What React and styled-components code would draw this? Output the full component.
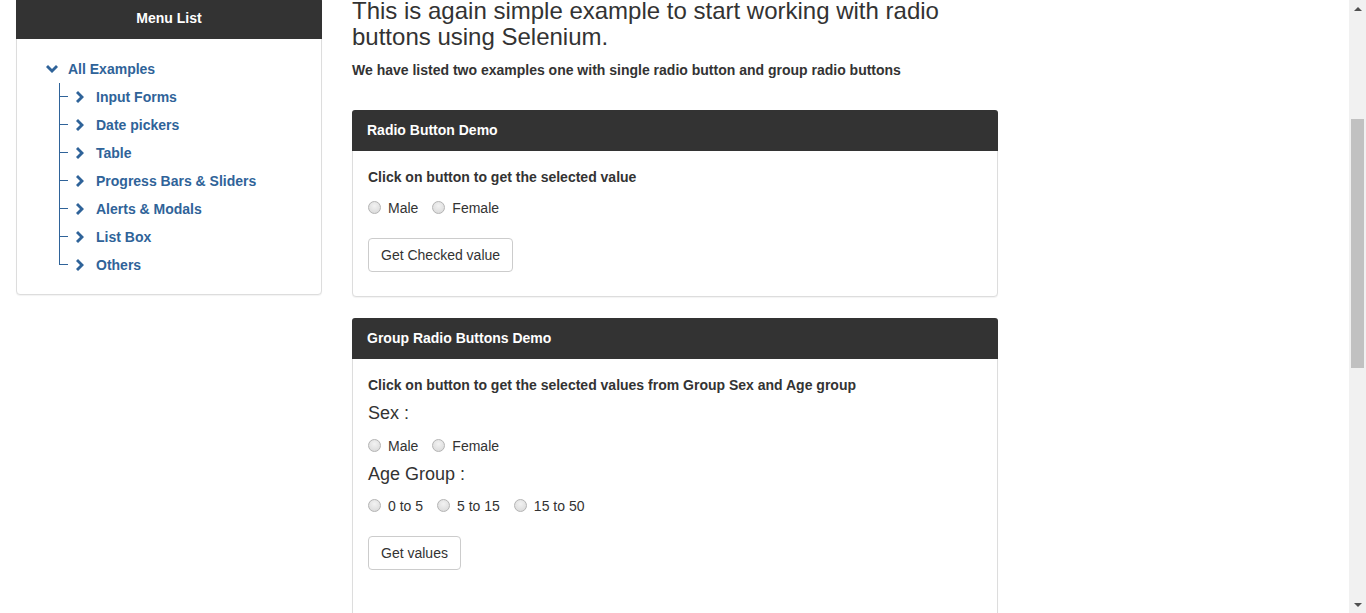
import styled, { createGlobalStyle } from "styled-components";

const GlobalStyle = createGlobalStyle`
  html, body {
    margin: 0;
    padding: 0;
    height: 613px;
    overflow: hidden;
    background: #fff;
  }
  body {
    font-family: "Liberation Sans", Arial, sans-serif;
    font-size: 14px;
    color: #333;
  }
`;

const LINK = "#2f6399";

const menu = [
  "Input Forms",
  "Date pickers",
  "Table",
  "Progress Bars & Sliders",
  "Alerts & Modals",
  "List Box",
  "Others",
];

const ChevronDown = () => (
  <svg width="12" height="8" viewBox="0 0 12 8">
    <polygon points="0,2 2,0 6,4 10,0 12,2 6,8" fill="currentColor" />
  </svg>
);

const ChevronRight = () => (
  <svg width="8" height="12" viewBox="0 0 8 12">
    <polygon points="2,0 8,6 2,12 0,10 4,6 0,2" fill="currentColor" />
  </svg>
);

function Sidebar() {
  return (
    <MenuPanel>
      <MenuHeader>Menu List</MenuHeader>
      <MenuBody>
        <TopRow>
          <Chevron $gap={0}>
            <ChevronDown />
          </Chevron>
          <TreeLink $gap={10}>All Examples</TreeLink>
        </TopRow>
        <SubList>
          {menu.map((item, index) => (
            <SubRow key={item}>
              <Branch $last={index === menu.length - 1} />
              <Chevron $gap={8}>
                <ChevronRight />
              </Chevron>
              <TreeLink $gap={12}>{item}</TreeLink>
            </SubRow>
          ))}
        </SubList>
      </MenuBody>
    </MenuPanel>
  );
}

function RadioGroup({ name, options, top }) {
  return (
    <RadioRow $top={top}>
      {options.map((option) => (
        <RadioLabel key={option}>
          <Radio type="radio" name={name} value={option} />
          {option}
        </RadioLabel>
      ))}
    </RadioRow>
  );
}

export default function App() {
  return (
    <>
      <GlobalStyle />
      <Screen>
        <Page>
          <Sidebar />
          <Main>
            <Title>
              This is again simple example to start working with radio buttons
              using Selenium.
            </Title>
            <Lead>
              We have listed two examples one with single radio button and group
              radio buttons
            </Lead>

            <Panel>
              <PanelHeading>Radio Button Demo</PanelHeading>
              <PanelBody>
                <Hint>Click on button to get the selected value</Hint>
                <RadioGroup name="optradio" options={["Male", "Female"]} top={11} />
                <Button>Get Checked value</Button>
              </PanelBody>
            </Panel>

            <Panel $open>
              <PanelHeading>Group Radio Buttons Demo</PanelHeading>
              <PanelBody>
                <Hint>
                  Click on button to get the selected values from Group Sex and
                  Age group
                </Hint>
                <GroupTitle $top={8}>Sex :</GroupTitle>
                <RadioGroup name="gender" options={["Male", "Female"]} top={13} />
                <GroupTitle $top={8}>Age Group :</GroupTitle>
                <RadioGroup
                  name="ageGroup"
                  options={["0 to 5", "5 to 15", "15 to 50"]}
                  top={12}
                />
                <Button>Get values</Button>
              </PanelBody>
            </Panel>
          </Main>
        </Page>
        <Scrollbar>
          <ArrowBox>
            <Arrow />
          </ArrowBox>
          <Track>
            <Thumb />
          </Track>
          <ArrowBox>
            <Arrow $down />
          </ArrowBox>
        </Scrollbar>
      </Screen>
    </>
  );
}

const Screen = styled.div`
  display: flex;
  height: 613px;
  overflow: hidden;
`;

const Page = styled.div`
  flex: 1;
  display: flex;
  align-items: flex-start;
  gap: 30px;
  padding-left: 16px;
`;

const MenuPanel = styled.div`
  width: 306px;
  box-sizing: border-box;
  margin-top: -2px;
  border: 1px solid #ddd;
  border-radius: 4px;
  background: #fff;
  box-shadow: 0 1px 1px rgba(0, 0, 0, 0.05);
`;

const MenuHeader = styled.div`
  background: #333;
  color: #fff;
  font-weight: bold;
  font-size: 14px;
  line-height: 20px;
  text-align: center;
  padding: 10px 15px;
  border-bottom: 1px solid #333;
  border-radius: 3px 3px 0 0;
  margin: -1px -1px 0;
`;

const MenuBody = styled.div`
  padding: 16px 0 15px;
`;

const TopRow = styled.div`
  display: flex;
  align-items: center;
  height: 28px;
  padding-left: 29px;
`;

const TreeLink = styled.span`
  margin-left: ${({ $gap }) => $gap}px;
  color: ${LINK};
  font-weight: bold;
  font-size: 14px;
  line-height: 28px;
`;

const SubList = styled.div`
  display: flex;
  flex-direction: column;
  padding-left: 42px;
`;

const SubRow = styled.div`
  display: flex;
  align-items: center;
  height: 28px;
`;

const Branch = styled.span`
  width: 9px;
  height: 28px;
  flex: none;
  background:
    linear-gradient(${LINK}, ${LINK}) no-repeat 0 0 / 1px ${({ $last }) => ($last ? "50%" : "100%")},
    linear-gradient(${LINK}, ${LINK}) no-repeat 0 13px / 100% 1px;
`;

const Chevron = styled.span`
  display: flex;
  margin-left: ${({ $gap }) => $gap}px;
  color: ${LINK};
`;

const Main = styled.div`
  width: 646px;
`;

const Title = styled.h1`
  margin: -2px 0 0;
  font-size: 24px;
  font-weight: normal;
  line-height: 1.1;
  color: #333;
`;

const Lead = styled.p`
  margin: 9px 0 30px;
  font-size: 14px;
  font-weight: bold;
  line-height: 20px;
  color: #333;
`;

const Panel = styled.div`
  border: 1px solid #ddd;
  border-radius: 4px;
  background: #fff;
  margin-bottom: 21px;
  box-shadow: 0 1px 1px rgba(0, 0, 0, 0.05);
  ${({ $open }) => ($open ? "height: 320px;" : "")}
`;

const PanelHeading = styled.div`
  background: #333;
  color: #fff;
  font-size: 14px;
  font-weight: bold;
  line-height: 20px;
  padding: 10px 15px;
  border-bottom: 1px solid #333;
  border-radius: 3px 3px 0 0;
  margin: -1px -1px 0;
`;

const PanelBody = styled.div`
  padding: 16px 15px 24px;
`;

const Hint = styled.p`
  margin: 0;
  font-size: 14px;
  font-weight: bold;
  line-height: 20px;
  color: #333;
`;

const GroupTitle = styled.p`
  margin: ${({ $top }) => $top}px 0 0;
  font-size: 18px;
  line-height: 20px;
  color: #333;
`;

const RadioRow = styled.div`
  display: flex;
  align-items: center;
  margin-top: ${({ $top }) => $top}px;
  height: 20px;
`;

const RadioLabel = styled.label`
  display: flex;
  align-items: center;
  font-size: 14px;
  line-height: 20px;
  color: #333;
  margin-right: 14px;
`;

const Radio = styled.input`
  appearance: none;
  width: 13px;
  height: 13px;
  margin: 0 7px 0 0;
  border: 1px solid #b4b4b4;
  border-radius: 50%;
  background: radial-gradient(circle at 50% 35%, #f2f2f2 0%, #dcdcdc 80%);
  box-sizing: border-box;
`;

const Button = styled.button`
  display: block;
  margin-top: 20px;
  height: 34px;
  padding: 6px 12px;
  font-family: inherit;
  font-size: 14px;
  line-height: 20px;
  color: #333;
  background: #fff;
  border: 1px solid #ccc;
  border-radius: 4px;
`;

const Scrollbar = styled.div`
  width: 17px;
  flex: none;
  display: flex;
  flex-direction: column;
  background: #f1f1f1;
`;

const ArrowBox = styled.div`
  height: 17px;
  display: flex;
  align-items: center;
  justify-content: center;
`;

const Arrow = styled.span`
  width: 0;
  height: 0;
  border-left: 4px solid transparent;
  border-right: 4px solid transparent;
  ${({ $down }) =>
    $down ? "border-top: 4px solid #505050;" : "border-bottom: 4px solid #505050;"}
`;

const Track = styled.div`
  flex: 1;
  padding: 102px 2px 0;
`;

const Thumb = styled.div`
  height: 249px;
  background: #c1c1c1;
`;
